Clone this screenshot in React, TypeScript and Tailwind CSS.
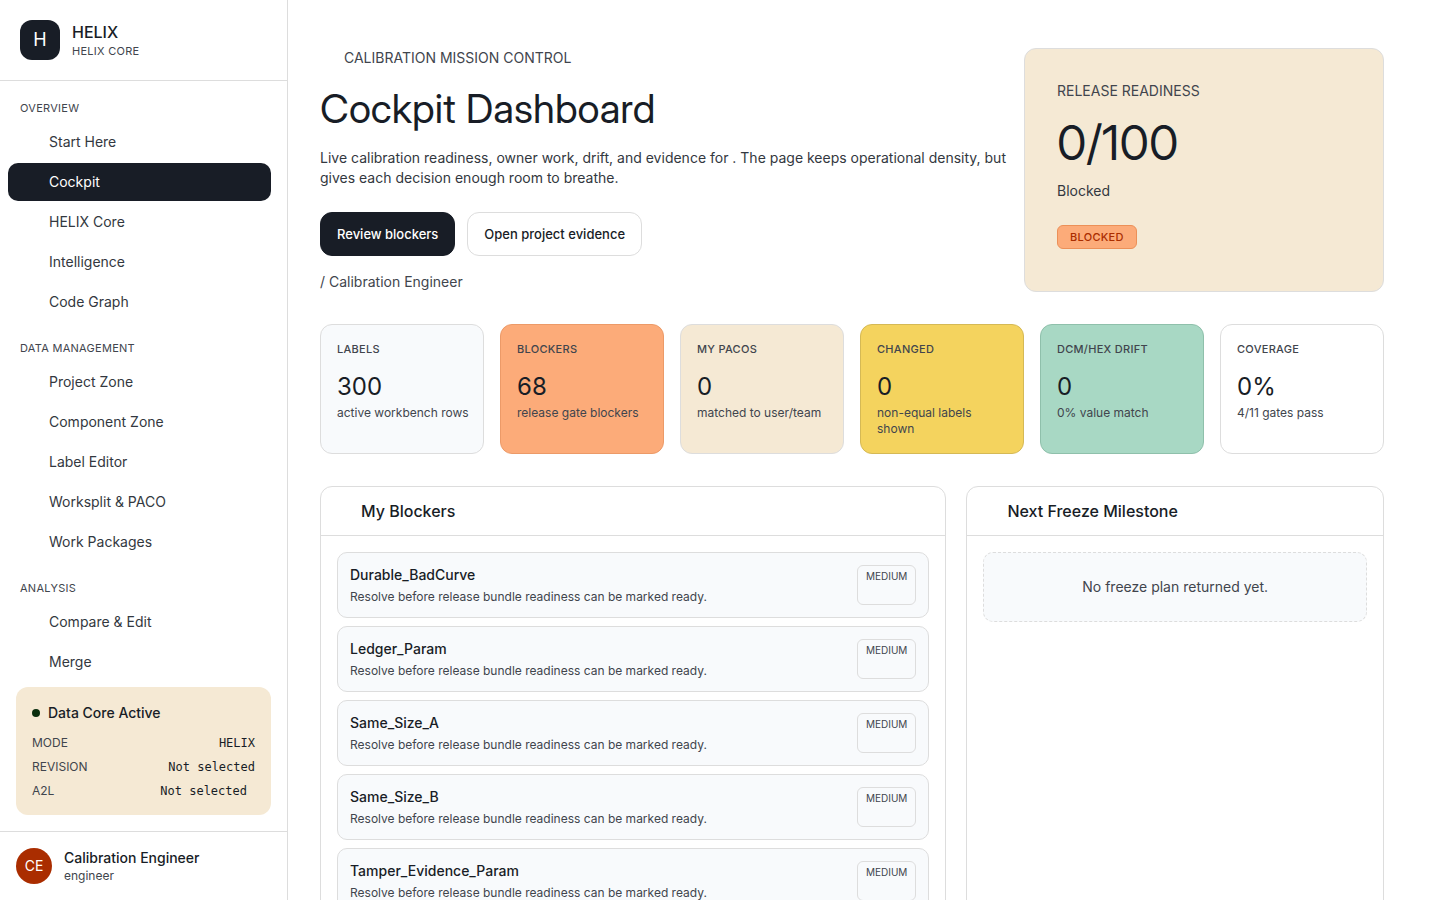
import React from "react";
import clsx from "clsx";

const navGroups = [
  { title: "Overview", items: ["Start Here", "Cockpit", "HELIX Core", "Intelligence", "Code Graph"] },
  {
    title: "Data Management",
    items: ["Project Zone", "Component Zone", "Label Editor", "Worksplit & PACO", "Work Packages"],
  },
  { title: "Analysis", items: ["Compare & Edit", "Merge"] },
];

const metrics = [
  { label: "Labels", value: "300", note: "active workbench rows", tone: "bg-[#f8fafc] border-[#dddddd]" },
  { label: "Blockers", value: "68", note: "release gate blockers", tone: "bg-[#fcab79] border-[#ec9a68]" },
  { label: "My PACOs", value: "0", note: "matched to user/team", tone: "bg-[#f5e9d4] border-[#dddddd]" },
  { label: "Changed", value: "0", note: "non-equal labels shown", tone: "bg-[#f4d35e] border-[#d5b955]" },
  { label: "DCM/HEX Drift", value: "0", note: "0% value match", tone: "bg-[#a8d8c4] border-[#8fc0ab]" },
  { label: "Coverage", value: "0%", note: "4/11 gates pass", tone: "bg-white border-[#dddddd]" },
];

const blockers = ["Durable_BadCurve", "Ledger_Param", "Same_Size_A", "Same_Size_B", "Tamper_Evidence_Param"];

function Sidebar() {
  return (
    <aside className="flex w-72 shrink-0 flex-col border-r border-[#dddddd] bg-white">
      <div className="flex items-center gap-3 border-b border-[#dddddd] p-5">
        <div className="flex size-10 items-center justify-center rounded-xl bg-[#181d26] text-lg text-white">H</div>
        <div className="pt-0.5">
          <div className="text-base leading-5 font-medium">HELIX</div>
          <div className="text-[11px] leading-[18px] tracking-wide text-[#41454d] uppercase">Helix Core</div>
        </div>
      </div>

      <nav className="min-h-0 flex-1 overflow-hidden pr-4 pl-2">
        {navGroups.map((group) => (
          <section key={group.title}>
            <h2 className="px-3 pt-[19px] pb-[7px] text-[11px] leading-4 tracking-wide text-[#41454d] uppercase">
              {group.title}
            </h2>
            <ul className="flex flex-col gap-0.5">
              {group.items.map((item) => (
                <li key={item}>
                  <a
                    href="#"
                    aria-current={item === "Cockpit" ? "page" : undefined}
                    className={clsx(
                      "block rounded-[10px] py-[9px] pr-3 pl-[41px] text-sm",
                      item === "Cockpit" ? "bg-[#181d26] text-white" : "text-[#333840]",
                    )}
                  >
                    {item}
                  </a>
                </li>
              ))}
            </ul>
          </section>
        ))}
      </nav>

      <section className="m-4 mt-0 rounded-xl bg-[#f5e9d4] px-4 pt-4 pb-3.5">
        <div className="flex items-center gap-2 text-sm font-medium">
          <span className="size-2 rounded-full bg-[#0a2e0e]" />
          Data Core Active
        </div>
        <dl className="mt-2.5 flex flex-col gap-1 text-xs leading-5">
          <StatusRow label="MODE" value="HELIX" />
          <StatusRow label="REVISION" value="Not selected" />
          <StatusRow label="A2L" value="Not selected" inset />
        </dl>
      </section>

      <footer className="flex items-center gap-3 border-t border-[#dddddd] p-4">
        <div className="flex size-9 items-center justify-center rounded-full bg-[#aa2d00] text-sm text-white">CE</div>
        <div>
          <div className="text-sm font-medium">Calibration Engineer</div>
          <div className="text-xs text-[#41454d]">engineer</div>
        </div>
      </footer>
    </aside>
  );
}

function StatusRow({ label, value, inset }: { label: string; value: string; inset?: boolean }) {
  return (
    <div className={clsx("flex justify-between", inset && "pr-2")}>
      <dt className="text-[#41454d]">{label}</dt>
      <dd className="font-['DejaVu_Sans_Mono',monospace]">{value}</dd>
    </div>
  );
}

function Hero() {
  return (
    <div className="grid grid-cols-[minmax(0,1fr)_360px] gap-3">
      <div>
        <p className="pl-6 text-sm text-[#41454d] uppercase">Calibration Mission Control</p>
        <h1 className="mt-4 font-['Inter_Display','Inter',sans-serif] text-[40px] leading-[50px]">
          Cockpit Dashboard
        </h1>
        <p className="mt-3.5 text-sm text-[#333840]">
          Live calibration readiness, owner work, drift, and evidence for . The page keeps operational density, but
          gives each decision enough room to breathe.
        </p>
        <div className="mt-6 flex gap-3 text-[13px] font-medium">
          <button type="button" className="h-11 rounded-xl border border-[#181d26] bg-[#181d26] px-4 pt-0.5 text-white">
            Review blockers
          </button>
          <button type="button" className="h-11 rounded-xl border border-[#dddddd] bg-white px-4 pt-0.5">
            Open project evidence
          </button>
        </div>
        <p className="mt-4 text-sm text-[#41454d]">/ Calibration Engineer</p>
      </div>

      <section className="rounded-xl border border-[#dddddd] bg-[#f5e9d4] p-8">
        <h2 className="text-sm text-[#41454d] uppercase">Release readiness</h2>
        <p className="mt-2 font-['Inter_Display','Inter',sans-serif] text-5xl leading-[68px]">0/100</p>
        <p className="mt-1 text-sm text-[#333840]">Blocked</p>
        <span className="mt-6 inline-block rounded-md border border-[#ec9058] bg-[#fcab79] px-3 py-[3px] text-[11px] leading-4 font-medium tracking-wide text-[#aa2d00] uppercase">
          Blocked
        </span>
      </section>
    </div>
  );
}

export default function App() {
  return (
    <div className="flex h-screen overflow-hidden bg-white font-['Inter',sans-serif] text-[#181d26]">
      <Sidebar />
      <main className="min-w-0 flex-1 overflow-hidden pt-12 pr-14 pl-8">
        <Hero />

        <div className="mt-8 grid grid-cols-6 gap-4">
          {metrics.map((m) => (
            <section key={m.label} className={clsx("rounded-xl border py-4 pr-3 pl-4", m.tone)}>
              <h2 className="text-[11px] leading-4 font-medium tracking-wide text-[#41454d] uppercase">{m.label}</h2>
              <p className="mt-3.5 text-2xl">{m.value}</p>
              <p className="mt-0.5 text-xs text-[#41454d]">{m.note}</p>
            </section>
          ))}
        </div>

        <div className="mt-8 grid grid-cols-[3fr_2fr] gap-5">
          <section className="rounded-xl border border-[#dddddd]">
            <h2 className="border-b border-[#dddddd] py-3 pr-4 pl-10 text-base font-medium">My Blockers</h2>
            <ul className="flex flex-col gap-2 p-4">
              {blockers.map((name) => (
                <li key={name} className="flex justify-between rounded-[10px] border border-[#dddddd] bg-[#f8fafc] p-3">
                  <div>
                    <div className="text-sm font-medium">{name}</div>
                    <div className="mt-1 text-xs text-[#41454d]">
                      Resolve before release bundle readiness can be marked ready.
                    </div>
                  </div>
                  <span className="rounded-md border border-[#dddddd] px-2 py-1 text-[10px] leading-3 text-[#41454d] uppercase">
                    Medium
                  </span>
                </li>
              ))}
            </ul>
          </section>

          <section className="rounded-xl border border-[#dddddd]">
            <h2 className="border-b border-[#dddddd] py-3 pr-4 pl-10 text-base font-medium">Next Freeze Milestone</h2>
            <div className="p-4">
              <p className="rounded-[10px] border border-dashed border-[#dddddd] bg-[#f8fafc] p-6 text-center text-sm text-[#41454d]">
                No freeze plan returned yet.
              </p>
            </div>
          </section>
        </div>
      </main>
    </div>
  );
}
